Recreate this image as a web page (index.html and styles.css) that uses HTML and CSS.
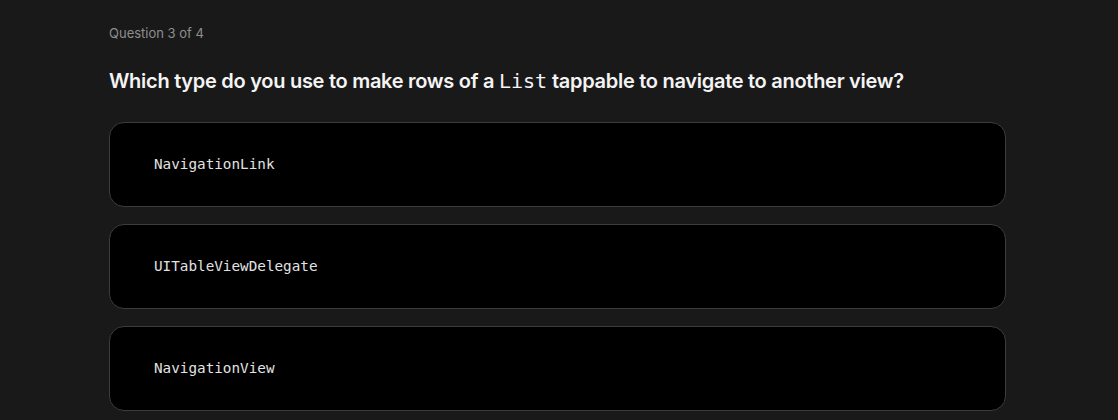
FILE: index.html
```html
<!DOCTYPE html>
<html>
<head>
<meta charset="utf-8">
<link rel="stylesheet" href="styles.css">
</head>
<body>
<main class="quiz">
  <p class="progress">Question 3 of 4</p>
  <h1 class="question">Which type do you use to make rows of a <code>List</code> tappable to navigate to another view?</h1>
  <div class="options">
    <button class="option"><code>NavigationLink</code></button>
    <button class="option"><code>UITableViewDelegate</code></button>
    <button class="option"><code>NavigationView</code></button>
  </div>
</main>
</body>
</html>
```
FILE: styles.css
```css
html, body {
  margin: 0;
  padding: 0;
  background: #191919;
}
body {
  font-family: Inter, "Noto Sans", sans-serif;
  color: #f2f2f2;
}
.quiz {
  width: 897px;
  margin-left: 109px;
  padding-top: 25px;
}
.progress {
  margin: 0;
  font-size: 13px;
  line-height: 16px;
  color: #8e8e8e;
}
.question {
  margin: 26px 0 0;
  font-size: 20px;
  font-weight: 600;
  line-height: 28px;
  letter-spacing: -0.28px;
  color: #f4f4f4;
}
.question code {
  font-family: "DejaVu Sans Mono", monospace;
  font-weight: 400;
  font-size: 20px;
  letter-spacing: 0;
}
.options {
  margin-top: 27px;
  display: flex;
  flex-direction: column;
  gap: 17px;
}
.option {
  display: flex;
  align-items: center;
  height: 85px;
  box-sizing: border-box;
  padding: 0 44px 2px;
  background: #000;
  border: 1px solid #3c3c3c;
  border-radius: 15px;
  text-align: left;
  cursor: pointer;
}
.option code {
  font-family: "DejaVu Sans Mono", monospace;
  font-size: 14.3px;
  color: #e2e2e2;
}
```
